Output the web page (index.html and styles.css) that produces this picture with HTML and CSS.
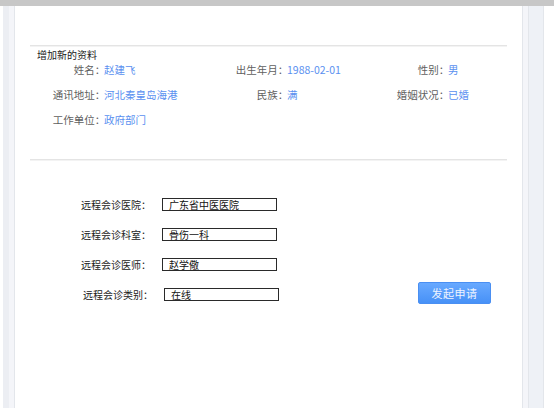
FILE: index.html
```html
<!DOCTYPE html>
<html lang="zh-CN">
<head>
<meta charset="utf-8">
<title>增加新的资料</title>
<link rel="stylesheet" href="styles.css">
</head>
<body>
<div class="topbar"></div>
<div class="frame">
  <div class="gutter-l"></div>
  <div class="strip-a"></div>
  <div class="strip-b"></div>
  <main class="main">
    <div class="rule rule-top"></div>
    <h2 class="heading">增加新的资料</h2>
    <div class="info">
      <span class="lbl">姓名：</span><span class="val">赵建飞</span>
      <span class="lbl">出生年月：</span><span class="val">1988-02-01</span>
      <span class="lbl">性别：</span><span class="val">男</span>
      <span class="lbl">通讯地址：</span><span class="val">河北秦皇岛海港</span>
      <span class="lbl">民族：</span><span class="val">满</span>
      <span class="lbl">婚姻状况：</span><span class="val">已婚</span>
      <span class="lbl">工作单位：</span><span class="val">政府部门</span>
    </div>
    <div class="rule rule-mid"></div>
    <div class="form">
      <div class="frow">
        <span class="flabel">远程会诊医院：</span>
        <span class="fbox">广东省中医医院</span>
      </div>
      <div class="frow">
        <span class="flabel">远程会诊科室：</span>
        <span class="fbox">骨伤一科</span>
      </div>
      <div class="frow">
        <span class="flabel">远程会诊医师：</span>
        <span class="fbox">赵学儆</span>
      </div>
      <div class="frow frow-shift">
        <span class="flabel">远程会诊类别：</span>
        <span class="fbox">在线</span>
        <button class="btn" type="button">发起申请</button>
      </div>
    </div>
  </main>
  <div class="strip-c"></div>
  <div class="strip-d"></div>
  <div class="gutter-r"></div>
</div>
</body>
</html>
```
FILE: styles.css
```css
html, body {
  margin: 0;
  padding: 0;
  background: #ffffff;
}
body {
  width: 554px;
  height: 408px;
  overflow: hidden;
  font-family: "Noto Sans CJK SC", "Noto Sans", sans-serif;
}
.topbar {
  height: 6px;
  background: #c7c7c7;
}
.frame {
  display: flex;
  height: 402px;
}
.gutter-l { width: 3px; background: #ffffff; }
.strip-a { width: 6px; background: #eceef3; }
.strip-b { width: 5px; background: #f4f5f9; border-right: 1px solid #e3e6eb; }
.main {
  width: 507px;
  background: #ffffff;
  padding-top: 39px;
  box-sizing: border-box;
}
.strip-c { width: 5px; background: #f4f5f9; border-left: 1px solid #e3e6eb; border-right: 1px solid #e3e6eb; }
.strip-d { width: 14px; background: #eef1f6; border-right: 1px solid #e3e6eb; }
.gutter-r { width: 10px; background: #ffffff; }

.rule {
  height: 1px;
  background: #e4e4e4;
  margin: 0 15px;
  box-shadow: 0 1px 0 #f3f3f3;
}
.heading {
  margin: 2px 0 0 22px;
  font-size: 10px;
  line-height: 14px;
  font-weight: normal;
  color: #222;
}
.info {
  display: grid;
  grid-template-columns: 70px 113px 70px 91px 70px 1fr;
  grid-auto-rows: 16px;
  row-gap: 9px;
  margin-left: 15px;
  font-size: 10.5px;
  line-height: 16px;
}
.lbl {
  text-align: right;
  color: #5f5f5f;
  white-space: nowrap;
  font-feature-settings: "halt";
}
.val {
  padding-left: 4px;
  color: #5a90f0;
  white-space: nowrap;
}
.rule-mid {
  margin-top: 31px;
}
.form {
  display: flex;
  flex-direction: column;
  gap: 17px;
  padding-top: 38px;
  padding-left: 66px;
}
.frow {
  display: flex;
  align-items: center;
  height: 13px;
}
.frow-shift {
  padding-left: 2px;
}
.flabel {
  width: 81px;
  font-size: 10px;
  color: #222;
  white-space: nowrap;
}
.fbox {
  width: 115px;
  height: 13px;
  box-sizing: border-box;
  border: 1px solid #2a2a2a;
  padding-left: 6px;
  font-size: 10px;
  line-height: 11px;
  color: #111;
  white-space: nowrap;
}
.btn {
  margin-left: auto;
  margin-right: 31px;
  margin-top: -4px;
  width: 73px;
  height: 22px;
  padding: 0;
  border: 1px solid #4a8ff2;
  border-radius: 2px;
  background: linear-gradient(#68a9ff, #4791f7);
  color: #eef4ff;
  font-family: "Noto Sans CJK SC", sans-serif;
  font-size: 11px;
  line-height: 20px;
  letter-spacing: 0.5px;
}
```
